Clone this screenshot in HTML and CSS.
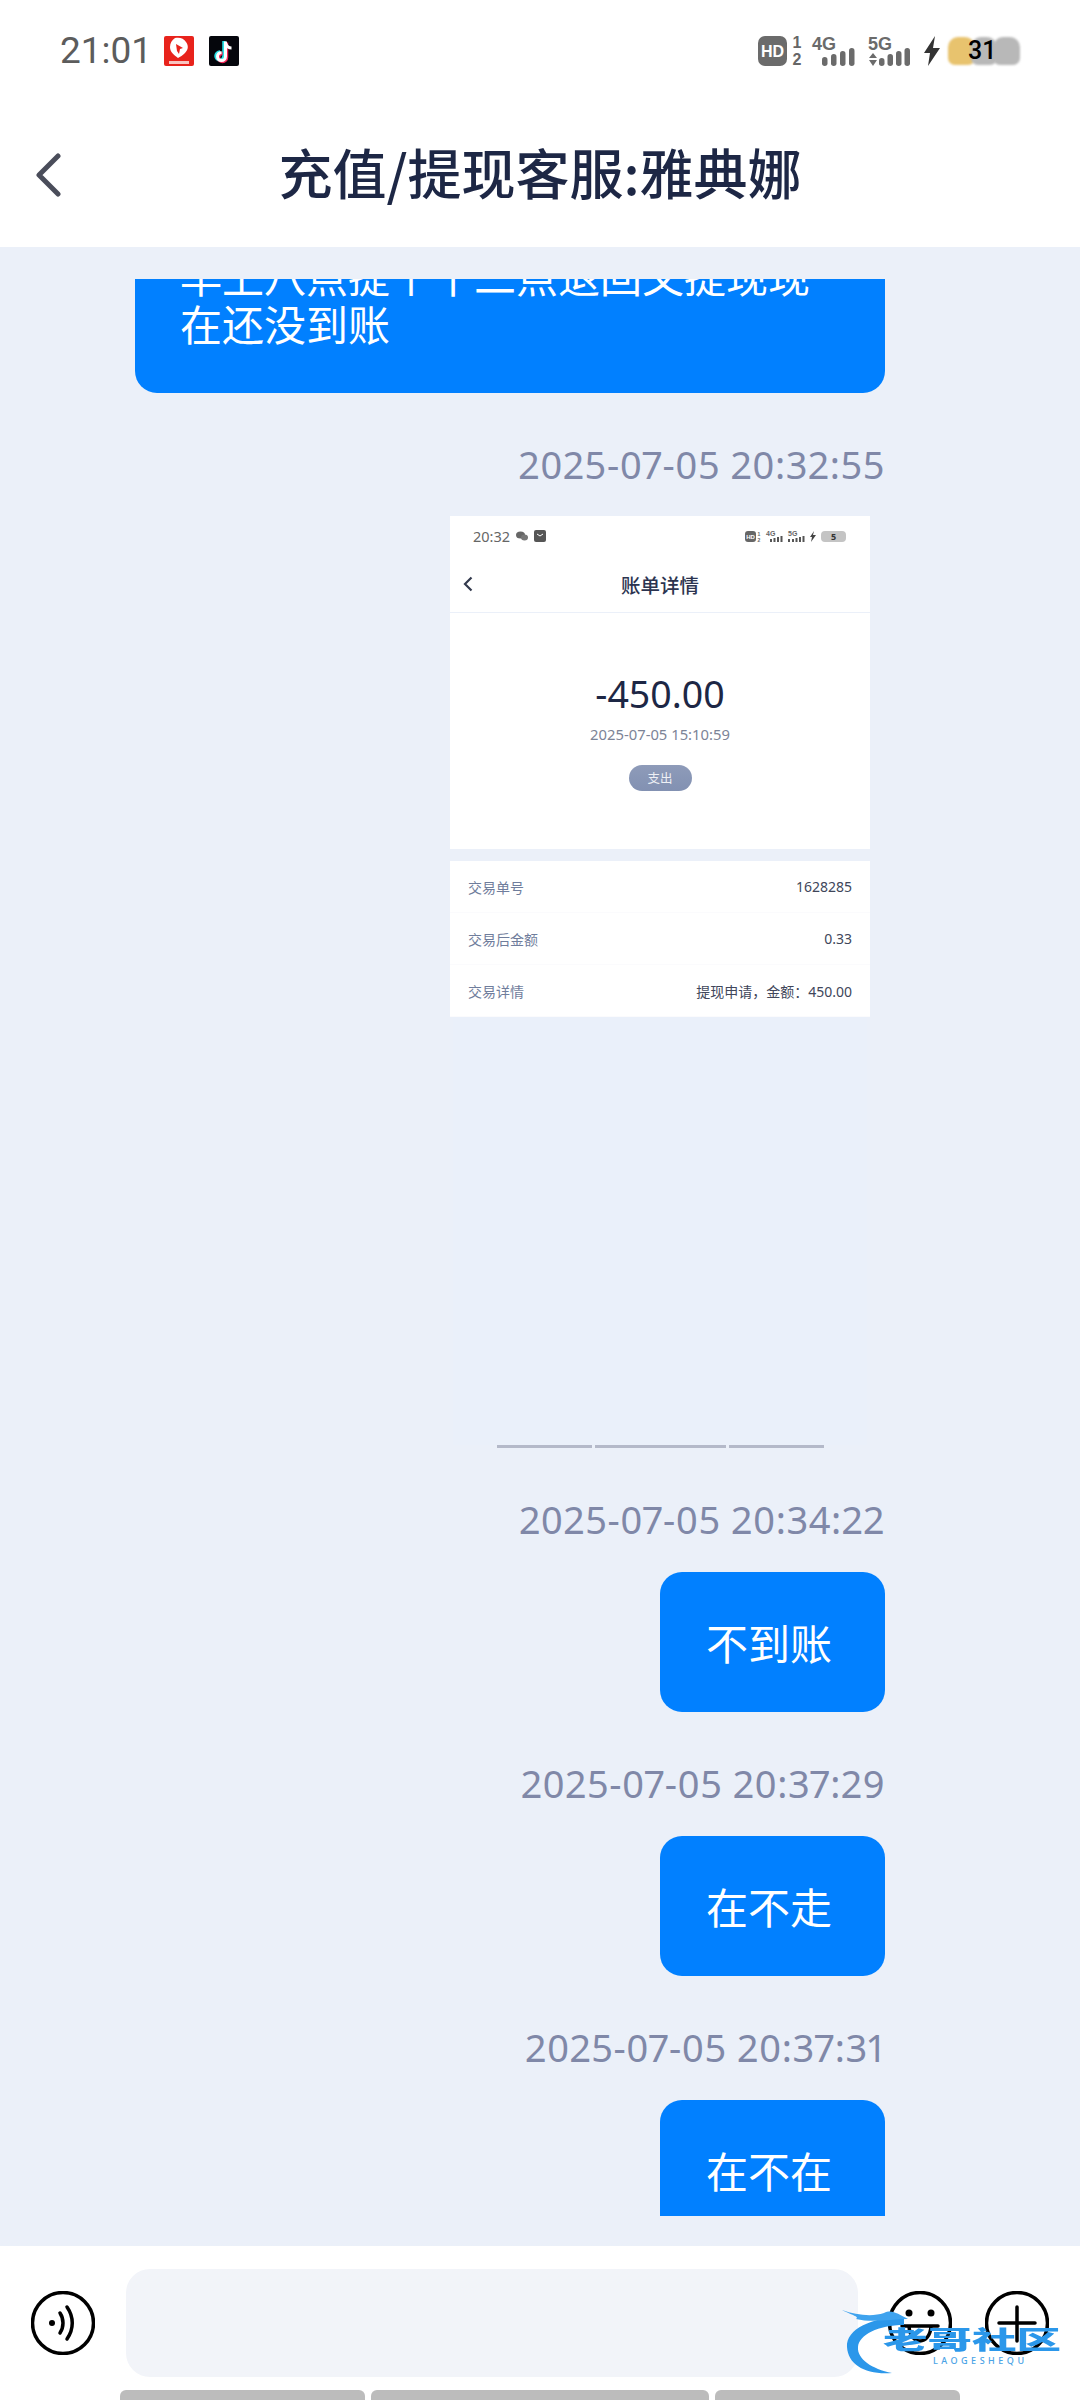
FILE: index.html
```html
<!DOCTYPE html>
<html lang="zh-CN">
<head>
    <meta charset="UTF-8">
    <meta name="viewport" content="width=device-width, initial-scale=1.0">
    <title>充值/提现客服:雅典娜</title>
    <link rel="stylesheet" href="styles.css">
</head>
<body>
    <div class="app">
        <div class="status-bar">
            <span class="clock">21:01</span>
            <svg class="app-icon" viewBox="0 0 30 30">
                <rect width="30" height="30" rx="2" fill="#e8231c"/>
                <path d="M11 2c4-1 9 0 11 4 3 4 2 8-1 11-2 2-5 4-7 5-4-3-8-6-8-11 0-4 2-7 5-9z" fill="#fff"/>
                <path d="M12 8l7 4-3 1-1 5-2-3z" fill="#e8231c"/>
                <rect x="5" y="25" width="20" height="3" fill="#f9c4c0"/>
            </svg>
            <svg class="app-icon" viewBox="0 0 30 30">
                <rect width="30" height="30" rx="2" fill="#05060c"/>
                <path d="M15 5v15a4 4 0 1 1-4-4" fill="none" stroke="#29e0e6" stroke-width="3.500"/>
                <path d="M17.500 6.500v15a4 4 0 1 1-4-4" fill="none" stroke="#f5285a" stroke-width="3.500"/>
                <path d="M16.500 5.500v15a4 4 0 1 1-4-4M16.500 7c1 3 3 5 6 5" fill="none" stroke="#fff" stroke-width="3"/>
            </svg>
            <div class="status-right">
                <svg class="hd" viewBox="0 0 44 30">
                    <rect width="29" height="30" rx="7" fill="#6b6b6b"/>
                    <text x="14.500" y="21" text-anchor="middle" class="hd-text">HD</text>
                    <text x="39" y="12" text-anchor="middle" class="sim-text">1</text>
                    <text x="39" y="29" text-anchor="middle" class="sim-text">2</text>
                </svg>
                <svg class="net" viewBox="0 0 46 30">
                    <text x="0" y="14" class="net-text">4G</text>
                    <rect x="10" y="21" width="5.500" height="9" rx="2.700"/>
                    <rect x="19" y="18" width="5.500" height="12" rx="2.700"/>
                    <rect x="28" y="15" width="5.500" height="15" rx="2.700"/>
                    <rect x="37" y="12" width="5.500" height="18" rx="2.700"/>
                </svg>
                <svg class="net" viewBox="0 0 46 30">
                    <text x="0" y="14" class="net-text">5G</text>
                    <path d="M1 22l4-5 4 5zM1 24h8l-4 6z"/>
                    <rect x="11" y="22" width="5.500" height="8" rx="2.700"/>
                    <rect x="19.500" y="18" width="5.500" height="12" rx="2.700"/>
                    <rect x="28" y="15" width="5.500" height="15" rx="2.700"/>
                    <rect x="36.500" y="12" width="5.500" height="18" rx="2.700"/>
                </svg>
                <svg class="bolt" viewBox="0 0 16 30">
                    <path d="M11 0L0 17h6L4 30l12-18H9z" fill="#333"/>
                </svg>
                <div class="battery">
                    <span class="blob gold"></span>
                    <span class="blob grey"></span>
                    <span class="blob grey"></span>
                    <span class="battery-num">31</span>
                </div>
            </div>
        </div>

        <header class="top-bar">
            <svg class="back" viewBox="0 0 26 44">
                <path d="M23 3L4 22l19 19" fill="none" stroke="#4a4d5a" stroke-width="5" stroke-linecap="round" stroke-linejoin="round"/>
            </svg>
            <h1>充值/提现客服:雅典娜</h1>
        </header>

        <main class="chat">
            <div class="messages">
                <div class="bubble first">早上八点提个十二点退回又提现现在还没到账</div>

                <div class="stamp">2025-07-05 20:32:55</div>
                <div class="shot">
                    <div class="shot-head">
                        <div class="shot-status">
                            <span>20:32</span>
                            <svg class="shot-wechat" viewBox="0 0 12 10">
                                <ellipse cx="4.500" cy="4" rx="4.500" ry="3.600" fill="#666"/>
                                <ellipse cx="8.500" cy="6.500" rx="3.500" ry="3" fill="#777"/>
                            </svg>
                            <svg class="shot-mail" viewBox="0 0 12 12">
                                <rect width="12" height="12" rx="2" fill="#555"/>
                                <path d="M3 4l3 2 3-2" fill="none" stroke="#fff"/>
                            </svg>
                            <div class="shot-status-right">
                                <svg class="shot-hd" viewBox="0 0 16 11">
                                    <rect width="11" height="11" rx="3" fill="#666"/>
                                    <text x="5.500" y="8" text-anchor="middle" class="shot-hd-text">HD</text>
                                    <text x="14" y="5" text-anchor="middle" class="shot-sim">1</text>
                                    <text x="14" y="11" text-anchor="middle" class="shot-sim">2</text>
                                </svg>
                                <svg class="shot-net" viewBox="0 0 17 12">
                                    <text x="0" y="6" class="shot-net-text">4G</text>
                                    <path d="M4 9h2v3H4zM7.500 8h2v4h-2zM11 7h2v5h-2zM14.500 6h2v6h-2z"/>
                                </svg>
                                <svg class="shot-net" viewBox="0 0 17 12">
                                    <text x="0" y="6" class="shot-net-text">5G</text>
                                    <path d="M0 9h2v3H0zM4 9h2v3H4zM7.500 8h2v4h-2zM11 7h2v5h-2zM14.500 6h2v6h-2z"/>
                                </svg>
                                <svg class="shot-bolt" viewBox="0 0 6 11">
                                    <path d="M4 0L0 6h2l-1 5 5-7H3z" fill="#444"/>
                                </svg>
                                <span class="shot-battery">5</span>
                            </div>
                        </div>
                        <div class="shot-nav">
                            <svg class="shot-back" viewBox="0 0 10 16">
                                <path d="M8.500 1.500L2 8l6.500 6.500" fill="none" stroke="#333a4d" stroke-width="2.200"/>
                            </svg>
                            <span class="shot-title">账单详情</span>
                        </div>
                    </div>
                    <div class="shot-body">
                        <div class="shot-amount">-450.00</div>
                        <div class="shot-date">2025-07-05 15:10:59</div>
                        <div class="shot-pill">支出</div>
                    </div>
                    <div class="shot-panel">
                        <div class="shot-row"><span class="shot-label">交易单号</span><span>1628285</span></div>
                        <div class="shot-row"><span class="shot-label">交易后金额</span><span>0.33</span></div>
                        <div class="shot-row"><span class="shot-label">交易详情</span><span>提现申请，金额：450.00</span></div>
                    </div>
                    <div class="shot-rest"></div>
                    <div class="shot-scroll">
                        <span class="seg side"></span>
                        <span class="seg mid"></span>
                        <span class="seg side"></span>
                    </div>
                </div>

                <div class="stamp">2025-07-05 20:34:22</div>
                <div class="bubble">不到账</div>

                <div class="stamp">2025-07-05 20:37:29</div>
                <div class="bubble">在不走</div>

                <div class="stamp">2025-07-05 20:37:31</div>
                <div class="bubble">在不在</div>
            </div>
        </main>

        <footer class="composer">
            <div class="input-row">
                <svg class="round-icon" viewBox="0 0 64 64">
                    <circle cx="32" cy="32" r="30.500"/>
                    <circle cx="21" cy="32" r="3" class="solid"/>
                    <path d="M29 22c4 6 4 14 0 20M36 16c7 10 7 22 0 32"/>
                </svg>
                <div class="input-box"></div>
                <svg class="round-icon emoji" viewBox="0 0 64 64">
                    <circle cx="32" cy="32" r="30.500"/>
                    <circle cx="21" cy="22" r="3.500" class="solid"/>
                    <circle cx="43" cy="22" r="3.500" class="solid"/>
                    <path d="M14 35h36M21 35c1 20 21 20 22 0"/>
                </svg>
                <svg class="round-icon plus" viewBox="0 0 64 64">
                    <circle cx="32" cy="32" r="30.500"/>
                    <path d="M32 16v34M14 32h36"/>
                </svg>
            </div>
            <div class="nav-bars">
                <span class="nav-bar side"></span>
                <span class="nav-bar mid"></span>
                <span class="nav-bar side"></span>
            </div>
        </footer>

        <div class="watermark">
            <svg class="dragon" viewBox="0 0 130 80">
                <path d="M62 12C30 12 4 24 5 42c1 18 19 28 45 26C30 64 15 54 16 42c1-12 20-22 46-22z" fill="#2b97ea"/>
                <path d="M0 5c14 5 30 7 42 3 8-4 14 1 24 6-16 0-36 4-52 0 4-2-4-4-14-9z" fill="#3fa3ee"/>
            </svg>
            <span class="mark-cn">老哥社区</span>
            <span class="mark-en">LAOGESHEQU</span>
        </div>
    </div>
</body>
</html>
```

FILE: styles.css
```css
* {
    box-sizing: border-box;
}
html, body {
    margin: 0;
    padding: 0;
}
body {
    font-family: "Noto Sans CJK SC", "Noto Sans", sans-serif;
    background-color: #fff;
}
.app {
    position: relative;
    width: 1080px;
    height: 2400px;
    display: flex;
    flex-direction: column;
    overflow: hidden;
}

/* status bar */
.status-bar {
    height: 102px;
    padding: 36px 64px 0 60px;
    display: flex;
    align-items: flex-start;
    flex-shrink: 0;
}
.clock {
    font-family: "Roboto", sans-serif;
    font-size: 37px;
    line-height: 30px;
    color: #5c5c5c;
    margin-right: 12px;
}
.app-icon {
    width: 30px;
    height: 30px;
    margin-right: 15px;
}
.status-right {
    margin-left: auto;
    display: flex;
    align-items: flex-start;
    gap: 10px;
}
.status-right svg {
    overflow: visible;
}
.hd {
    width: 44px;
    height: 30px;
}
.hd-text {
    font: 700 16px "Liberation Sans", sans-serif;
    fill: #fff;
}
.sim-text {
    font: 700 16px "Liberation Sans", sans-serif;
    fill: #666;
}
.net {
    width: 46px;
    height: 30px;
    fill: #6b6b6b;
}
.net-text {
    font: 700 18px "Liberation Sans", sans-serif;
    fill: #6b6b6b;
}
.bolt {
    width: 16px;
    height: 30px;
}
.battery {
    position: relative;
    width: 68px;
    height: 28px;
    margin-left: -2px;
    margin-top: 1px;
    display: flex;
}
.blob {
    width: 27px;
    height: 28px;
    margin-right: -4px;
    border-radius: 10px 10px 7px 7px;
    filter: blur(1px);
}
.blob.gold {
    background-color: #e8c36e;
}
.blob.grey {
    background-color: #b8b8b8;
}
.battery-num {
    position: absolute;
    left: 20px;
    top: 0;
    font: 500 25px/28px "Roboto", sans-serif;
    color: #000;
}

/* title */
.top-bar {
    position: relative;
    height: 145px;
    flex-shrink: 0;
    display: flex;
    align-items: center;
    justify-content: center;
    background-color: #fff;
}
.top-bar h1 {
    margin: 0 0 6px;
    font-size: 54px;
    font-weight: 500;
    color: #1d2745;
}
.back {
    position: absolute;
    left: 35px;
    top: 51px;
    width: 26px;
    height: 44px;
}

/* chat */
.chat {
    flex: 1;
    min-height: 0;
    background-color: #ebf0f9;
    padding: 32px 0 30px;
    display: flex;
}
.messages {
    flex: 1;
    overflow: hidden;
    padding-right: 195px;
    display: flex;
    flex-direction: column;
    align-items: flex-end;
}
.bubble {
    max-width: 750px;
    min-width: 225px;
    flex-shrink: 0;
    padding: 46px;
    padding-left: 46px;
    font-size: 42px;
    line-height: 48px;
    color: #fff;
    background-color: #0180ff;
    border-radius: 22px;
}
.bubble.first {
    margin-top: -74px;
    padding-left: 45px;
}
.stamp {
    flex-shrink: 0;
    margin: 46px 0 28px;
    font-family: "Noto Sans", sans-serif;
    font-size: 38px;
    line-height: 50px;
    letter-spacing: 0.550px;
    font-variant-numeric: proportional-nums;
    color: #8088a8;
    white-space: nowrap;
}

/* screenshot inside the chat */
.shot {
    width: 420px;
    height: 932px;
    flex-shrink: 0;
    margin: -1px 15px 0 0;
    display: flex;
    flex-direction: column;
}
.shot-head {
    height: 96px;
    background-color: #fff;
}
.shot-status {
    height: 40px;
    padding: 0 24px 0 23px;
    display: flex;
    align-items: center;
    gap: 6px;
    font-family: "Noto Sans", sans-serif;
    font-size: 14.500px;
    color: #666;
}
.shot-status svg {
    overflow: visible;
}
.shot-wechat {
    width: 12px;
    height: 10px;
}
.shot-mail {
    width: 12px;
    height: 12px;
}
.shot-status-right {
    margin-left: auto;
    display: flex;
    align-items: center;
    gap: 5px;
}
.shot-hd {
    width: 16px;
    height: 11px;
}
.shot-hd-text {
    font: 700 6px "Liberation Sans", sans-serif;
    fill: #fff;
}
.shot-sim {
    font: 700 5px "Liberation Sans", sans-serif;
    fill: #666;
}
.shot-net {
    width: 17px;
    height: 12px;
    fill: #555;
}
.shot-net-text {
    font: 700 7px "Liberation Sans", sans-serif;
    fill: #666;
}
.shot-bolt {
    width: 6px;
    height: 11px;
}
.shot-battery {
    width: 25px;
    height: 11px;
    border-radius: 4px;
    background-color: #c4c4c4;
    font: 700 9px/11px "Noto Sans", sans-serif;
    color: #333;
    text-align: center;
}
.shot-nav {
    position: relative;
    height: 56px;
    display: flex;
    align-items: center;
    justify-content: center;
}
.shot-back {
    position: absolute;
    left: 13px;
    top: 20px;
    width: 10px;
    height: 16px;
}
.shot-title {
    font-size: 19.500px;
    font-weight: 500;
    color: #2c3450;
}
.shot-body {
    height: 236px;
    margin-top: 1px;
    background-color: #fff;
    display: flex;
    flex-direction: column;
    align-items: center;
}
.shot-amount {
    margin-top: 55px;
    font-family: "Noto Sans", sans-serif;
    font-size: 37.500px;
    line-height: 52px;
    color: #1d2745;
}
.shot-date {
    margin-top: 2px;
    font-family: "Noto Sans", sans-serif;
    font-size: 14.800px;
    line-height: 24px;
    color: #7c8497;
}
.shot-pill {
    margin-top: 19px;
    width: 63px;
    height: 26px;
    border-radius: 13px;
    background: linear-gradient(#8e9bb9, #8291b2);
    font-size: 12.500px;
    line-height: 26px;
    text-align: center;
    color: #eef0f5;
}
.shot-panel {
    margin-top: 12px;
    background-color: #fff;
}
.shot-row {
    height: 52px;
    padding: 0 18px;
    display: flex;
    align-items: center;
    justify-content: space-between;
    font-family: "Noto Sans", "Noto Sans CJK SC", sans-serif;
    font-size: 14px;
    color: #40465a;
    border-bottom: 1px solid #fbfbfd;
}
.shot-label {
    color: #6f7d9c;
}
.shot-rest {
    flex: 1;
    margin: 0 3px;
    background-color: #eaf0fa;
}
.shot-scroll {
    height: 3px;
    display: flex;
    justify-content: center;
    gap: 3px;
}
.seg {
    height: 3px;
    background-color: #b4b9c9;
}
.seg.side {
    width: 95px;
}
.seg.mid {
    width: 131px;
}

/* composer */
.composer {
    height: 154px;
    flex-shrink: 0;
    background-color: #fff;
    display: flex;
    flex-direction: column;
}
.input-row {
    height: 108px;
    margin-top: 23px;
    padding: 0 31px;
    display: flex;
    align-items: center;
}
.input-box {
    width: 732px;
    height: 108px;
    margin: 0 30px 0 31px;
    border-radius: 24px;
    background-color: #f2f4f9;
}
.round-icon {
    width: 64px;
    height: 64px;
    flex-shrink: 0;
    fill: none;
    stroke: #000;
    stroke-width: 3.500;
    stroke-linecap: round;
}
.round-icon .solid {
    fill: #000;
    stroke: none;
}
.round-icon.plus {
    margin-left: 33px;
}
.nav-bars {
    margin-top: 13px;
    padding: 0 120px;
    display: flex;
    gap: 6px;
}
.nav-bar {
    height: 10px;
    background-color: #bcbcbc;
    border-radius: 6px 6px 0 0;
}
.nav-bar.side {
    width: 245px;
}
.nav-bar.mid {
    width: 338px;
}

/* watermark over the composer */
.watermark {
    position: absolute;
    left: 842px;
    top: 2305px;
    width: 225px;
    height: 80px;
}
.dragon {
    position: absolute;
    left: 0;
    top: 0;
    width: 130px;
    height: 80px;
}
.mark-cn {
    position: absolute;
    left: 41px;
    top: 20px;
    font-size: 25px;
    line-height: 26px;
    font-weight: 900;
    color: #2b97ea;
    white-space: nowrap;
    transform: scaleX(1.780);
    transform-origin: left center;
}
.mark-en {
    position: absolute;
    left: 91px;
    top: 50px;
    font: 500 9px/12px "Noto Sans", sans-serif;
    letter-spacing: 3.500px;
    color: #4aa3e6;
    white-space: nowrap;
}
```
